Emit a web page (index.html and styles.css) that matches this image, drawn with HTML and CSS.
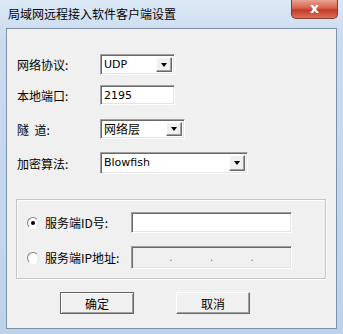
FILE: index.html
```html
<!DOCTYPE html>
<html lang="zh-CN">
<head>
  <meta charset="UTF-8">
  <title>局域网远程接入软件客户端设置</title>
  <link rel="stylesheet" href="styles.css">
</head>
<body>
  <div class="window">
    <div class="titlebar">
      <span class="title">局域网远程接入软件客户端设置</span>
      <span class="close">x</span>
    </div>
    <div class="client">
      <div class="field f1">
        <span class="label">网络协议:</span>
        <div class="select w-proto"><span class="value latin">UDP</span><span class="arrow"></span></div>
      </div>
      <div class="field f2">
        <span class="label">本地端口:</span>
        <div class="edit w-port latin">2195</div>
      </div>
      <div class="field f3">
        <span class="label">隧&nbsp;&nbsp;道:</span>
        <div class="select w-tunnel"><span class="value">网络层</span><span class="arrow"></span></div>
      </div>
      <div class="field f4">
        <span class="label">加密算法:</span>
        <div class="select w-cipher"><span class="value latin">Blowfish</span><span class="arrow"></span></div>
      </div>

      <div class="group">
        <div class="radio-row">
          <span class="radio checked"></span>
          <span class="radio-label">服务端ID号:</span>
          <div class="edit w-server"></div>
        </div>
        <div class="radio-row">
          <span class="radio"></span>
          <span class="radio-label">服务端IP地址:</span>
          <div class="edit w-server ip">
            <span class="seg"></span><span class="dot">.</span>
            <span class="seg"></span><span class="dot">.</span>
            <span class="seg"></span><span class="dot">.</span>
            <span class="seg"></span>
          </div>
        </div>
      </div>

      <div class="buttons">
        <button class="btn default">确定</button>
        <button class="btn">取消</button>
      </div>
    </div>
  </div>
</body>
</html>
```

FILE: styles.css
```css
body {
  margin: 0;
  font-family: "Noto Sans CJK SC", "DejaVu Sans", sans-serif;
  font-size: 12px;
  color: #000;
}
.window {
  width: 343px;
  height: 334px;
  box-sizing: border-box;
  padding: 0 6px 5px 6px;
  background: linear-gradient(to bottom, #dce8f5, #c9dbef 40px, #bed3eb);
  display: flex;
  flex-direction: column;
}
.titlebar {
  height: 28px;
  display: flex;
  justify-content: space-between;
  align-items: flex-start;
}
.title {
  margin-top: 6px;
  padding-left: 2px;
  line-height: 16px;
}
.close {
  width: 45px;
  height: 18px;
  margin-right: -1px;
  border: 1px solid #8b3a2c;
  border-top: none;
  border-radius: 0 0 5px 5px;
  background: linear-gradient(to bottom, #e8a192, #d4634c 45%, #c23c27 55%, #d7705a);
  color: #fff;
  font-family: "DejaVu Sans", sans-serif;
  font-weight: bold;
  font-size: 14px;
  line-height: 17px;
  text-align: center;
}
.client {
  flex: 1;
  background: #f0f0f0;
  border: 1px solid #7f91a5;
  display: flex;
  flex-direction: column;
}
.field {
  display: flex;
  align-items: center;
  padding-left: 10px;
}
.f1 { margin-top: 25px; }
.f2 { margin-top: 10px; }
.f3 { margin-top: 14px; }
.f4 { margin-top: 13px; }
.label {
  width: 83px;
}
.latin {
  font-family: "DejaVu Sans", sans-serif;
  font-size: 11px;
}
.edit,
.select {
  box-sizing: border-box;
  background: #fff;
  border: 1px solid;
  border-color: #a0a0a0 #fff #fff #a0a0a0;
  box-shadow: inset 1px 1px #696969, inset -1px -1px #e3e3e3;
  display: flex;
  align-items: center;
  padding-left: 3px;
}
.w-proto { width: 75px; height: 21px; }
.w-port { width: 75px; height: 20px; }
.w-tunnel { width: 85px; height: 20px; }
.w-cipher { width: 148px; height: 22px; }
.select .value {
  flex: 1;
  line-height: 14px;
}
.select .arrow {
  width: 16px;
  align-self: stretch;
  margin: 2px 2px 2px 0;
  box-sizing: border-box;
  background: #f0f0f0;
  border: 1px solid;
  border-color: #fff #696969 #696969 #fff;
  box-shadow: inset -1px -1px #a0a0a0;
  display: flex;
  align-items: center;
  justify-content: center;
}
.select .arrow::after {
  content: "";
  border-left: 3.5px solid transparent;
  border-right: 3.5px solid transparent;
  border-top: 4px solid #000;
}
.group {
  margin: 25px 10px 0 9px;
  height: 80px;
  box-sizing: border-box;
  border: 1px solid #c5c5c5;
  box-shadow: inset 1px 1px #fff, 1px 1px #fff;
  padding: 12px 0 0 10px;
  display: flex;
  flex-direction: column;
  gap: 13px;
}
.radio-row {
  display: flex;
  align-items: center;
}
.radio {
  width: 12px;
  height: 12px;
  box-sizing: border-box;
  border-radius: 50%;
  border: 1px solid;
  border-color: #808080 #e3e3e3 #fff #808080;
  background: #fff;
  display: flex;
  align-items: center;
  justify-content: center;
}
.radio.checked::after {
  content: "";
  width: 4px;
  height: 4px;
  border-radius: 50%;
  background: #000;
}
.radio-label {
  width: 86px;
  margin-left: 6px;
}
.w-server {
  width: 161px;
  height: 21px;
}
.edit.ip {
  background: #f0f0f0;
  height: 23px;
  padding: 0;
}
.ip .seg {
  flex: 1;
}
.ip .dot {
  color: #707070;
  font-family: "DejaVu Sans", sans-serif;
  font-size: 10px;
  line-height: 10px;
}
.buttons {
  display: flex;
  gap: 42px;
  margin: 13px 0 0 53px;
}
.btn {
  width: 74px;
  height: 22px;
  box-sizing: border-box;
  padding: 0;
  font-family: "Noto Sans CJK SC", sans-serif;
  font-size: 12px;
  background: #f0f0f0;
  border: 1px solid;
  border-color: #fff #696969 #696969 #fff;
  box-shadow: inset -1px -1px #a0a0a0;
}
.btn.default {
  outline: 1px solid #646464;
  outline-offset: -1px;
  border-color: #646464;
  box-shadow: inset 1px 1px #fff, inset -1px -1px #a0a0a0;
}
```
